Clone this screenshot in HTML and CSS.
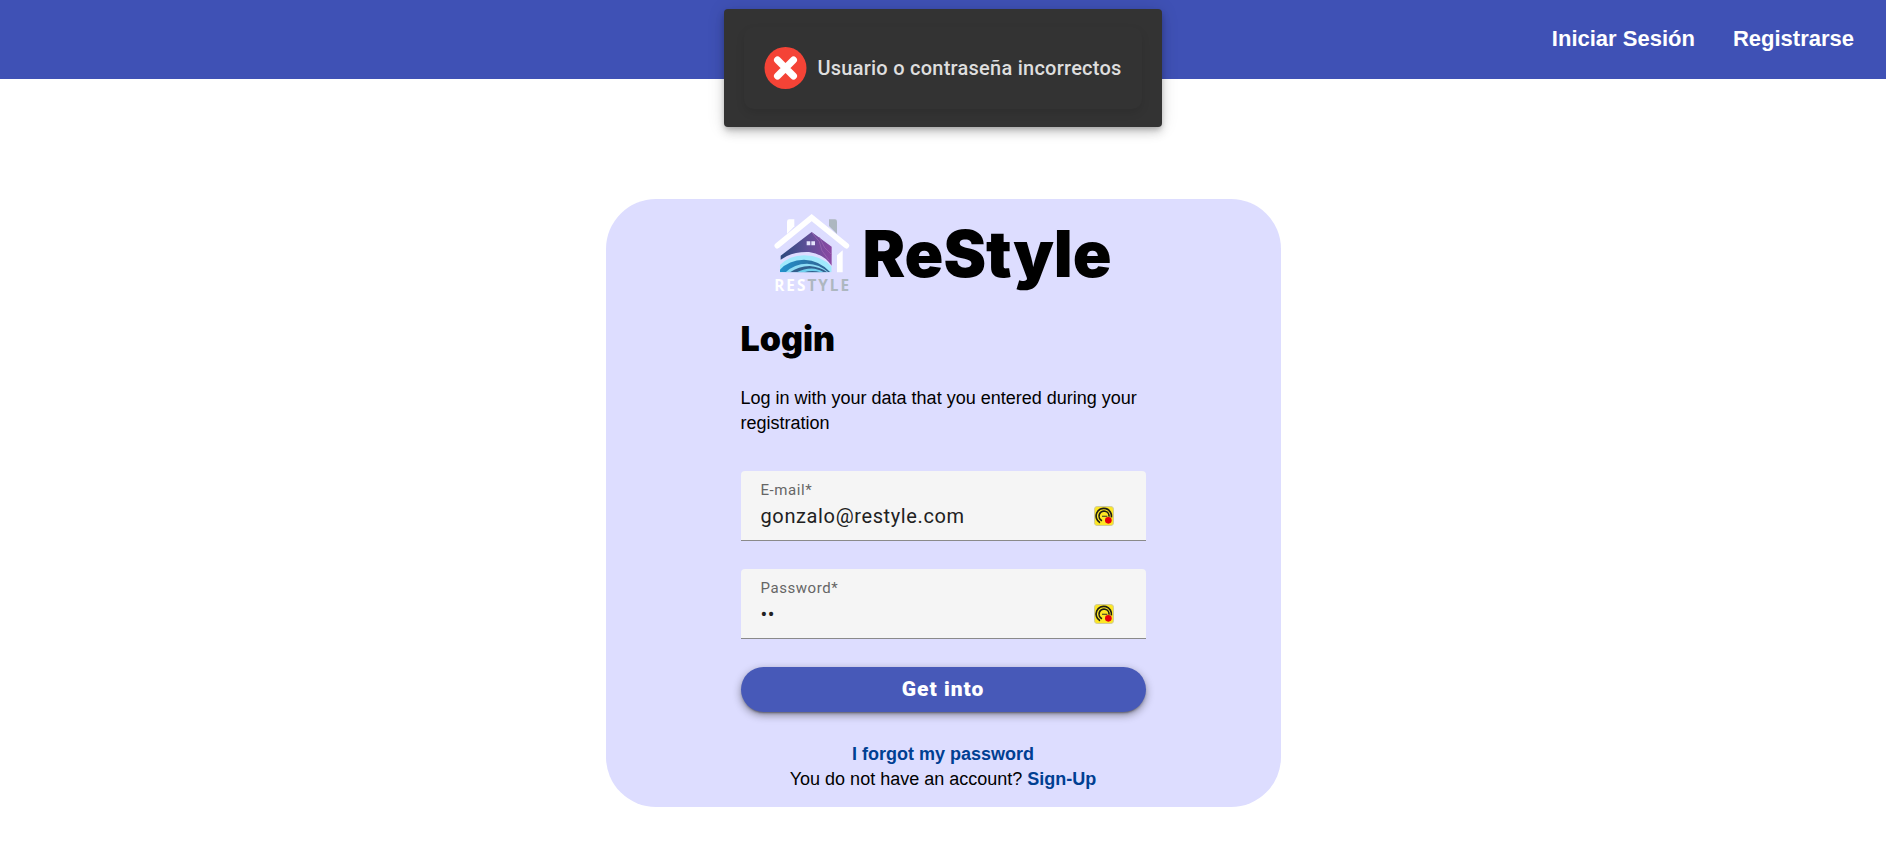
FILE: index.html
```html
<!DOCTYPE html>
<html lang="en">
<head>
<meta charset="utf-8">
<meta name="viewport" content="width=device-width, initial-scale=1">
<title>ReStyle</title>
<link rel="stylesheet" href="styles.css">
</head>
<body>
<svg class="sprite" aria-hidden="true">
  <symbol id="key-badge" viewBox="0 0 60 60">
    <rect x="1.500" y="1.500" width="57" height="57" rx="8" fill="#fde725" stroke="#cfcb9c" stroke-width="3"/>
    <g fill="none" stroke="#1f1e14">
      <path d="M18 50A23 23 0 1 1 52 34" stroke-width="5"/>
      <path d="M24 44A15 15 0 1 1 45 32" stroke-width="5"/>
      <path d="M24 31h16" stroke-width="4" stroke="#5f5b25"/>
    </g>
    <circle cx="43" cy="43" r="10" fill="#e3000b"/>
  </symbol>
</svg>

<header class="topbar">
  <nav class="topnav">
    <a href="#login">Iniciar Sesión</a>
    <a href="#register">Registrarse</a>
  </nav>
</header>

<div class="toast-layer">
  <div class="toast" role="alert">
    <div class="toast-body">
      <svg class="toast-icon" viewBox="0 0 42 42" aria-hidden="true">
        <circle cx="21" cy="21" r="21" fill="#f44336"/>
        <path d="M13 13L29 29M29 13L13 29" stroke="#fff" stroke-width="7" stroke-linecap="round"/>
      </svg>
      <span>Usuario o contraseña incorrectos</span>
    </div>
  </div>
</div>

<main class="page">
  <section class="card">
    <div class="brand">
      <svg class="logo" viewBox="40 41 228 252" role="img" aria-label="ReStyle">
        <defs>
          <linearGradient id="wall" x1="0" x2="1" y1="0" y2="0">
            <stop offset="0" stop-color="#2d4a7d"/>
            <stop offset=".5" stop-color="#5b5096"/>
            <stop offset="1" stop-color="#8c48a3"/>
          </linearGradient>
          <linearGradient id="wave" x1="0" x2="1" y1="0" y2="0">
            <stop offset="0" stop-color="#2391cb"/>
            <stop offset="1" stop-color="#315f8e"/>
          </linearGradient>
          <clipPath id="wave-box"><path d="M58 150H213V216H58z"/></clipPath>
        </defs>
        <path d="M79 101V64Q79 57 86 57H101V78z" fill="#fff"/>
        <path d="M205 57H223Q229 57 229 64V101L205 77z" fill="#adb7c0"/>
        <path d="M50 136L153 52L257 136" fill="none" stroke="#fff" stroke-width="17" stroke-linejoin="miter" stroke-linecap="round"/>
        <path d="M229 165L246 150V216H229z" fill="#fff"/>
        <path d="M60 166L153 95L213 139V196Q188 160 145 155Q94 153 60 178z" fill="url(#wall)"/>
        <path d="M153 96L176 124L184 151L205 180M176 110L192 142L213 163" fill="none" stroke="#a26ab5" stroke-width="2"/>
        <path d="M138 123h11v12h-11zM152 123h11v12h-11z" fill="#e4e4fb"/>
        <g clip-path="url(#wave-box)">
          <path d="M58 216V194Q86 166 130 165Q183 166 213 199V216z" fill="#a0e9fc"/>
          <path d="M58 216V208Q84 179 130 178Q178 180 209 216z" fill="url(#wave)"/>
          <path d="M75 216Q101 190 139 190Q177 191 203 216z" fill="#8edcf5"/>
          <path d="M88 216Q113 198 147 197Q178 199 200 216z" fill="#315f8e"/>
          <path d="M108 216Q135 202 162 205Q180 208 190 216z" fill="#70d0ee"/>
          <path d="M130 216Q154 208 180 216z" fill="#315f8e"/>
        </g>
        <text class="logo-word" x="156" y="273" text-anchor="middle"><tspan fill="#fff">RES</tspan><tspan fill="#adb7c0">TYLE</tspan></text>
      </svg>
      <h1>ReStyle</h1>
    </div>

    <form class="login">
      <h2>Login</h2>
      <p class="intro">Log in with your data that you entered during your registration</p>

      <div class="field">
        <label for="email">E-mail*</label>
        <div class="field-row">
          <input id="email" type="email" value="gonzalo@restyle.com">
          <svg class="badge" aria-hidden="true"><use href="#key-badge"/></svg>
        </div>
      </div>

      <div class="field">
        <label for="password">Password*</label>
        <div class="field-row">
          <input id="password" type="password" value="ab">
          <svg class="badge" aria-hidden="true"><use href="#key-badge"/></svg>
        </div>
      </div>

      <button class="submit" type="button">Get into</button>

      <div class="links">
        <a href="#forgot">I forgot my password</a>
        <span>You do not have an account? <a href="#signup">Sign-Up</a></span>
      </div>
    </form>
  </section>
</main>
</body>
</html>
```
FILE: styles.css
```css
* {
  box-sizing: border-box;
}

body {
  margin: 0;
  background: #fff;
  color: #000;
  font: 18px/25px "Liberation Sans", Arial, sans-serif;
}

a {
  color: #003f92;
  font-weight: 700;
  text-decoration: none;
}

.sprite {
  position: absolute;
  width: 0;
  height: 0;
}

.topbar {
  padding: 24px 32px 25px;
  background: #3f51b5;
}

.topnav {
  display: flex;
  justify-content: flex-end;
  gap: 38px;
  line-height: 30px;
}

.topnav a {
  color: #fff;
  font-size: 22px;
}

.toast-layer {
  position: absolute;
  top: 9px;
  left: 0;
  right: 0;
  display: flex;
  justify-content: center;
}

.toast {
  padding: 18px 20px;
  border-radius: 4px;
  background: #333;
  box-shadow: 0 3px 5px -1px rgba(0, 0, 0, .2), 0 6px 10px rgba(0, 0, 0, .14), 0 1px 18px rgba(0, 0, 0, .12);
}

.toast-body {
  display: flex;
  align-items: center;
  gap: 10px;
  padding: 20px;
  border-radius: 10px;
  color: #dedede;
  font: 500 20px/28px Roboto, sans-serif;
  letter-spacing: .0125em;
  box-shadow: 0 4px 8px rgba(0, 0, 0, .1);
}

.toast-icon {
  width: 43px;
  height: 42px;
}

.page {
  display: flex;
  justify-content: center;
  padding: 120px 16px 56px;
}

.card {
  width: 675px;
  max-width: 100%;
  padding: 15px 0;
  border-radius: 50px;
  background: #ddf;
}

.brand {
  display: flex;
  justify-content: center;
  align-items: flex-start;
  gap: 12px;
}

.logo {
  width: 76px;
  height: 84px;
  margin-bottom: -4px;
}

.logo-word {
  font: 700 46px "Open Sans", sans-serif;
  letter-spacing: 6px;
}

h1,
h2 {
  margin: 0;
  font-family: "Arial Black", Inter, sans-serif;
  font-weight: 900;
}

h1 {
  font-size: 64px;
  line-height: 80px;
}

h2 {
  font-size: 34px;
  line-height: 40px;
}

.login {
  width: 60%;
  margin: 25px auto 0;
}

.intro {
  margin: 27px 0 35px;
}

.field {
  margin-bottom: 28px;
  padding: 10px 20px 12px;
  border-bottom: 1px solid #8a8a8a;
  border-radius: 4px 4px 0 0;
  background: #f5f5f5;
  font-family: Roboto, sans-serif;
  letter-spacing: .03125em;
}

.field label {
  display: block;
  margin-bottom: 5px;
  color: #666;
  font-size: 15px;
  line-height: 18px;
}

.field-row {
  display: flex;
  align-items: center;
  padding-right: 12px;
}

.field input {
  flex: 1;
  min-width: 0;
  height: 24px;
  padding: 0;
  border: 0;
  outline: 0;
  background: transparent;
  color: #212121;
  font: 20px/24px Roboto, sans-serif;
  letter-spacing: .03125em;
}

.badge {
  width: 20px;
  height: 20px;
}

.submit {
  display: block;
  width: 100%;
  padding: 0;
  border: 0;
  border-radius: 23px;
  background: #4759b8;
  color: #fff;
  font: 900 21px/45px Roboto, sans-serif;
  letter-spacing: 1px;
  box-shadow: 0 3px 1px -2px rgba(0, 0, 0, .2), 0 2px 2px rgba(0, 0, 0, .14), 0 3px 8px rgba(0, 0, 0, .4);
}

.links {
  display: flex;
  flex-direction: column;
  align-items: center;
  margin-top: 30px;
}
```
